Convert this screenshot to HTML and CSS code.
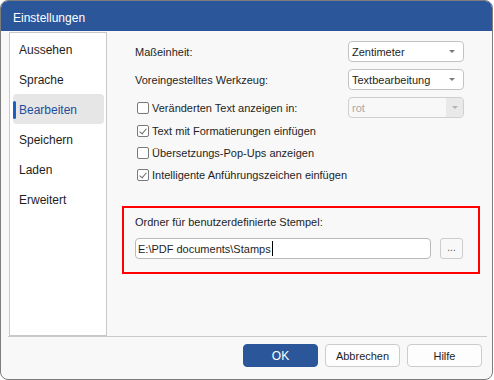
FILE: index.html
```html
<!DOCTYPE html>
<html lang="de">
  <head>
    <meta charset="UTF-8" />
    <title>Einstellungen</title>
    <link rel="stylesheet" href="styles.css">
  </head>
  <body>
    <div class="dialog">
      <!-- Title bar -->
      <div class="titlebar">Einstellungen</div>

      <div class="dialog-body">
        <!-- Category list -->
        <ul class="sidebar">
          <li>Aussehen</li>
          <li>Sprache</li>
          <li class="active">Bearbeiten</li>
          <li>Speichern</li>
          <li>Laden</li>
          <li>Erweitert</li>
        </ul>

        <div class="content">
          <div class="row">
            <span>Maßeinheit:</span>
            <div class="select"><span>Zentimeter</span><i class="arrow"></i></div>
          </div>
          <div class="row">
            <span>Voreingestelltes Werkzeug:</span>
            <div class="select"><span>Textbearbeitung</span><i class="arrow"></i></div>
          </div>
          <div class="row">
            <label class="check"><span class="box"></span>Veränderten Text anzeigen in:</label>
            <div class="select disabled"><span>rot</span><span class="drop"><i class="arrow"></i></span></div>
          </div>

          <label class="check line"><span class="box checked"></span>Text mit Formatierungen einfügen</label>
          <label class="check line"><span class="box"></span>Übersetzungs-Pop-Ups anzeigen</label>
          <label class="check line"><span class="box checked"></span>Intelligente Anführungszeichen einfügen</label>

          <!-- Highlighted stamp folder -->
          <div class="stamp-box">
            <div class="stamp-label">Ordner für benutzerdefinierte Stempel:</div>
            <div class="stamp-row">
              <div class="text-input">E:\PDF documents\Stamps<span class="caret"></span></div>
              <button class="browse">...</button>
            </div>
          </div>
        </div>
      </div>

      <div class="separator"></div>

      <div class="footer">
        <button class="btn primary">OK</button>
        <button class="btn">Abbrechen</button>
        <button class="btn">Hilfe</button>
      </div>
    </div>
  </body>
</html>
```

FILE: styles.css
```css
/* Global */
body {
  margin: 0;
  background-color: #ffffff;
  font-family: "Liberation Sans", Arial, sans-serif;
  font-size: 11px;
  color: #1e1e1e;
}

.dialog {
  width: 493px;
  height: 380px;
  box-sizing: border-box;
  border: 1px solid #7d7d7d;
  border-radius: 8px;
  overflow: hidden;
  background-color: #f8f8f8;
  display: flex;
  flex-direction: column;
}

/* Title bar */
.titlebar {
  height: 30px;
  background-color: #2b579a;
  color: #ffffff;
  font-size: 12px;
  line-height: 35px;
  padding-left: 12px;
  overflow: hidden;
  flex-shrink: 0;
}

.dialog-body {
  display: flex;
  height: 304px;
  padding-top: 1px;
}

/* Sidebar */
.sidebar {
  list-style: none;
  margin: 0 0 0 8px;
  padding: 1px 2px 0 3px;
  width: 98px;
  height: 304px;
  box-sizing: border-box;
  background-color: #ffffff;
  border: 1px solid #c9c9c9;
}

.sidebar li {
  height: 30px;
  line-height: 32px;
  padding-left: 6px;
  font-size: 12px;
  border-radius: 4px;
  position: relative;
}

.sidebar li.active {
  background-color: #e6e6e6;
  color: #1c4f9c;
}

.sidebar li.active::before {
  content: "";
  position: absolute;
  left: 0;
  top: 7px;
  width: 3px;
  height: 18px;
  border-radius: 2px;
  background-color: #1a5fc4;
}

/* Content */
.content {
  flex: 1;
  padding: 9px 28px 0 28px;
}

.row {
  display: flex;
  justify-content: space-between;
  align-items: center;
  height: 21px;
  margin-bottom: 7px;
}

.row:nth-child(3) {
  margin-bottom: 2px;
}

.select {
  width: 116px;
  height: 21px;
  box-sizing: border-box;
  border: 1px solid #c3c3c3;
  border-radius: 4px;
  background-color: #ffffff;
  display: flex;
  align-items: center;
  justify-content: space-between;
  padding-left: 3px;
  padding-right: 8px;
}

.arrow {
  width: 0;
  height: 0;
  border-left: 3px solid transparent;
  border-right: 3px solid transparent;
  border-top: 3px solid #7a7a7a;
}

.select.disabled {
  border-color: #cfcfcf;
  background-color: #f8f8f8;
  color: #a8a8a8;
  padding-right: 0;
}

.select.disabled .drop {
  width: 17px;
  height: 19px;
  background-color: #e9e9e9;
  border-radius: 0 3px 3px 0;
  display: flex;
  align-items: center;
  justify-content: center;
}

.select.disabled .arrow {
  border-top-color: #b5b5b5;
}

/* Checkboxes */
.check {
  display: flex;
  align-items: center;
}

.check.line {
  height: 22px;
}

.box {
  width: 12px;
  height: 12px;
  box-sizing: border-box;
  border: 1px solid #7a7a7a;
  border-radius: 2px;
  background-color: #ffffff;
  margin-left: 2px;
  margin-right: 3px;
  position: relative;
}

.box.checked::after {
  content: "";
  position: absolute;
  left: 3px;
  top: 1px;
  width: 3px;
  height: 6px;
  border-right: 1px solid #6a6a6a;
  border-bottom: 1px solid #6a6a6a;
  transform: rotate(40deg);
}

/* Stamp folder box */
.stamp-box {
  margin: 20px -16px 0 -13px;
  border: 2px solid #ff0000;
  padding: 6px 15px 13px 11px;
}

.stamp-label {
  height: 16px;
  line-height: 16px;
  margin-bottom: 8px;
}

.stamp-row {
  display: flex;
  align-items: center;
  gap: 9px;
}

.text-input {
  flex: 1;
  height: 21px;
  box-sizing: border-box;
  border: 1px solid #b9b9b9;
  border-radius: 4px;
  background-color: #ffffff;
  padding-left: 2px;
  display: flex;
  align-items: center;
}

.caret {
  display: inline-block;
  width: 1px;
  height: 15px;
  background-color: #000000;
  margin-left: 1px;
}

.browse {
  width: 23px;
  height: 21px;
  border: 1px solid #cccccc;
  border-radius: 3px;
  background-color: #f8f8f8;
  font-family: inherit;
  font-size: 10px;
  color: #555555;
  padding: 0 0 3px 0;
}

/* Separator and footer */
.separator {
  height: 1px;
  background-color: #c9c9c9;
  margin: 0 5px 0 7px;
}

.footer {
  display: flex;
  justify-content: flex-end;
  gap: 7px;
  padding: 7px 10px 0 0;
}

.btn {
  width: 75px;
  height: 23px;
  border: 1px solid #cccccc;
  border-radius: 4px;
  background-color: #fdfdfd;
  font-family: inherit;
  font-size: 11px;
  color: #1e1e1e;
  padding: 0;
}

.btn.primary {
  background-color: #2b579a;
  border-color: #2b579a;
  color: #ffffff;
  font-size: 12px;
}
```
